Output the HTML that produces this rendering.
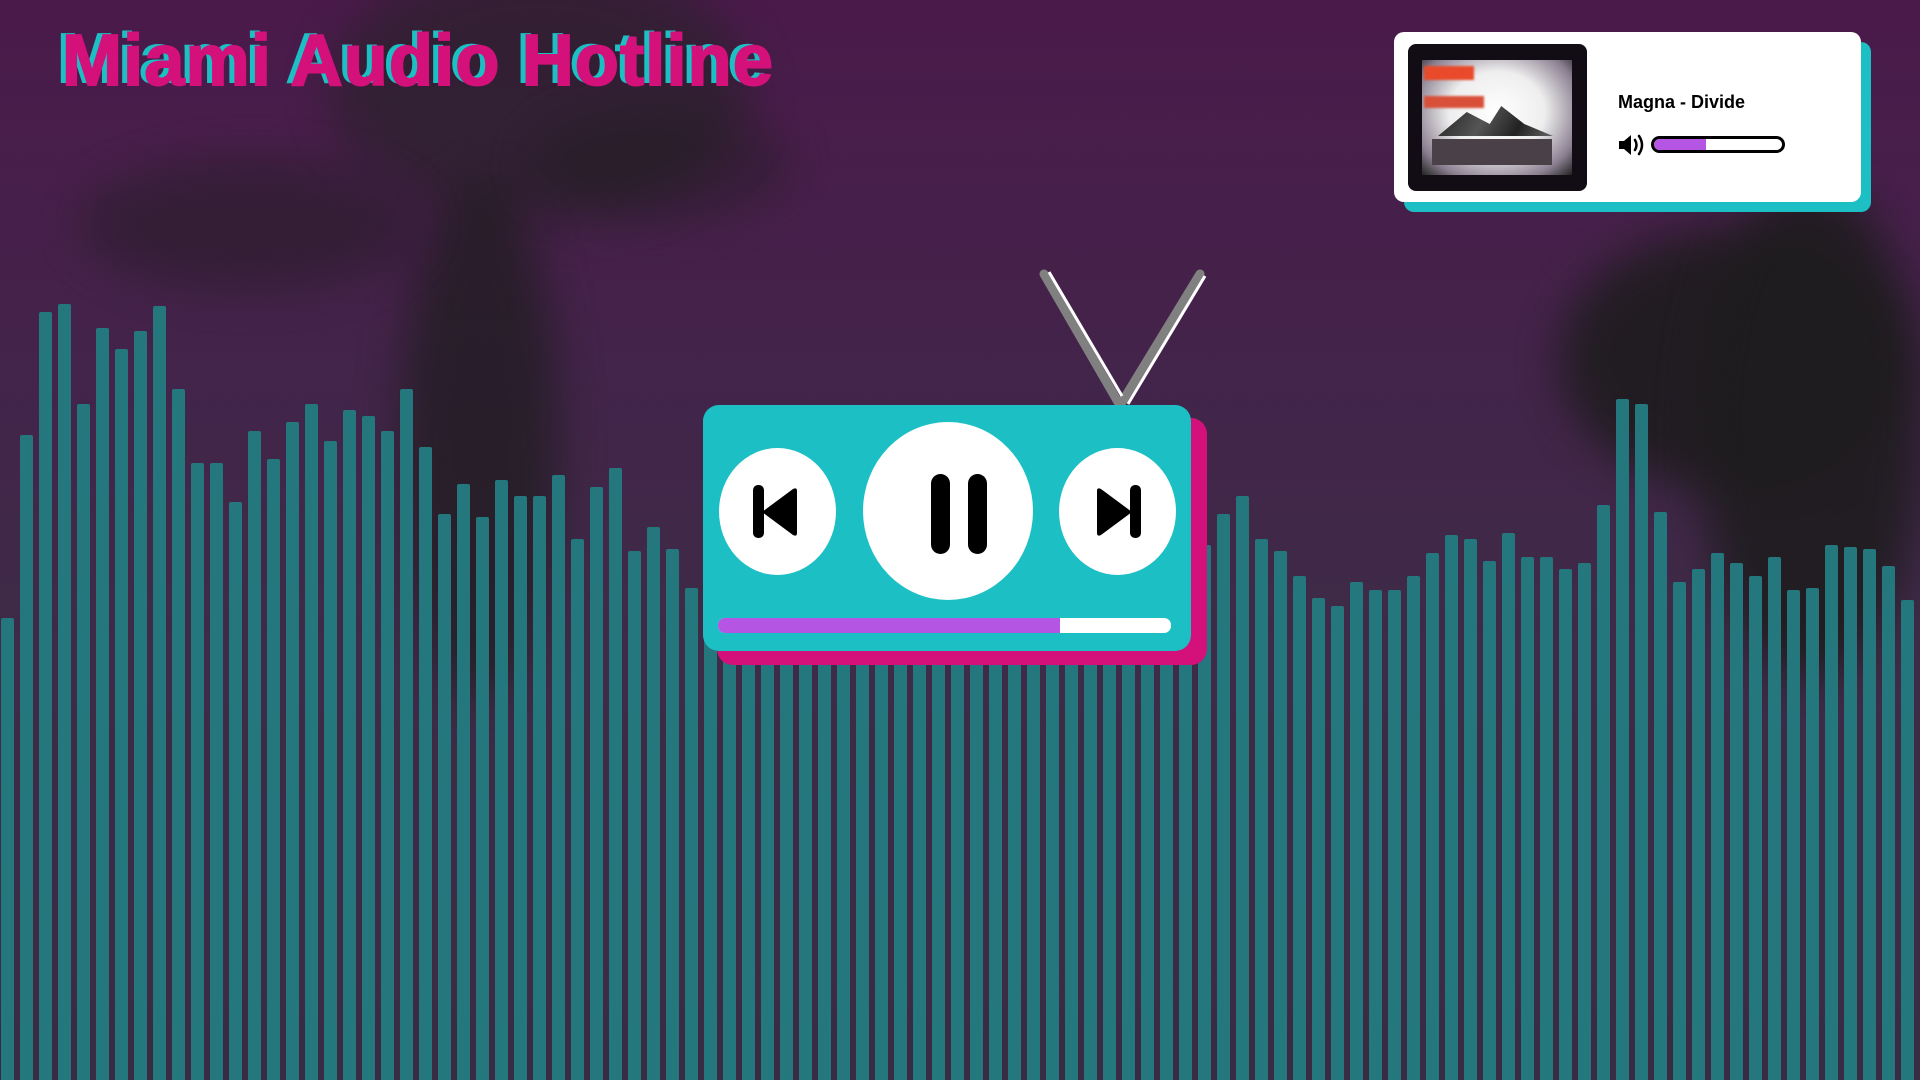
<!DOCTYPE html>
<html><head><meta charset="utf-8"><style>
*{margin:0;padding:0;box-sizing:border-box}
body{width:1920px;height:1080px;overflow:hidden;position:relative;font-family:"Liberation Sans",sans-serif;
background:linear-gradient(180deg,#4a1a4a 0%,#43244a 35%,#3e2b47 60%,#3a2b44 100%)}
.blob{position:absolute;background:#1e1c1e;border-radius:50%;filter:blur(22px);opacity:.8}
.bars{position:absolute;left:1px;top:0;width:1920px;height:1080px;display:flex;align-items:flex-end}
.bars i{display:block;width:13px;margin-right:6px;flex:none;background:#23777d;height:calc(1080px - var(--t)*1.2245px);border-radius:2px 2px 0 0}
h1{position:absolute;left:62px;top:20px;font-size:72px;font-weight:900;color:#d4107a;letter-spacing:1.2px;-webkit-text-stroke:2px #d4107a;text-shadow:-6px -2px 0 #1bbfc4;white-space:nowrap}
.card{position:absolute;left:1394px;top:32px;width:467px;height:170px;background:#fff;border-radius:10px;box-shadow:10px 10px 0 #1bbfc4}
.art{position:absolute;left:14px;top:12px;width:179px;height:147px;border-radius:8px;background:#120d14;overflow:hidden}
.art .scr{position:absolute;left:14px;top:16px;width:150px;height:115px;background:radial-gradient(ellipse at 50% 45%,#fff 0%,#eee 45%,#8a7f90 80%,#222 100%)}
.art .r{position:absolute;left:16px;top:22px;width:50px;height:14px;background:#e84a2a;filter:blur(1px)}
.art .r2{position:absolute;left:16px;top:52px;width:60px;height:12px;background:#d8503a;filter:blur(1px)}
.art .d{position:absolute;left:30px;top:62px;width:115px;height:30px;background:linear-gradient(120deg,#222 0%,#555 40%,#222 70%,#666 100%);clip-path:polygon(0 100%,25% 20%,45% 60%,55% 0,75% 60%,100% 100%)}
.art .d2{position:absolute;left:24px;top:95px;width:120px;height:26px;background:#4a4048}
.title{position:absolute;left:224px;top:60px;font-size:18px;font-weight:700;color:#000}
.vol{position:absolute;left:224px;top:100px}
.slider{position:absolute;left:257px;top:104px;width:134px;height:17px;border:3.5px solid #000;border-radius:9px;overflow:hidden;background:#fff}
.slider div{width:52px;height:100%;background:#b455e3}
.tvs{position:absolute;left:717px;top:418px;width:490px;height:247px;background:#d4107a;border-radius:16px}
.tv{position:absolute;left:703px;top:405px;width:488px;height:246px;background:#1cbfc4;border-radius:16px}
.btn{position:absolute;background:#fff;border-radius:50%}
.bar{position:absolute;left:15px;top:213px;width:453px;height:15px;background:#fff;border-radius:7px;overflow:hidden}
.bar div{width:342px;height:100%;background:#b455e3}
</style></head><body>
<div class="blob" style="left:330px;top:-40px;width:420px;height:260px;background:#252226;opacity:.6"></div>
<div class="blob" style="left:400px;top:180px;width:160px;height:520px;opacity:.7"></div>
<div class="blob" style="left:80px;top:160px;width:340px;height:130px;opacity:.45"></div>
<div class="blob" style="left:530px;top:110px;width:260px;height:110px;opacity:.4"></div>
<div class="blob" style="left:1560px;top:230px;width:340px;height:260px;opacity:.9"></div>
<div class="blob" style="left:1700px;top:180px;width:220px;height:500px;opacity:.9"></div>
<div class="bars">
<i style="--t:505"></i><i style="--t:355"></i><i style="--t:255"></i><i style="--t:248"></i><i style="--t:330"></i><i style="--t:268"></i><i style="--t:285"></i><i style="--t:270"></i><i style="--t:250"></i><i style="--t:318"></i>
<i style="--t:378"></i><i style="--t:378"></i><i style="--t:410"></i><i style="--t:352"></i><i style="--t:375"></i><i style="--t:345"></i><i style="--t:330"></i><i style="--t:360"></i><i style="--t:335"></i><i style="--t:340"></i>
<i style="--t:352"></i><i style="--t:318"></i><i style="--t:365"></i><i style="--t:420"></i><i style="--t:395"></i><i style="--t:422"></i><i style="--t:392"></i><i style="--t:405"></i><i style="--t:405"></i><i style="--t:388"></i>
<i style="--t:440"></i><i style="--t:398"></i><i style="--t:382"></i><i style="--t:450"></i><i style="--t:430"></i><i style="--t:448"></i><i style="--t:480"></i><i style="--t:500"></i><i style="--t:500"></i><i style="--t:500"></i>
<i style="--t:500"></i><i style="--t:500"></i><i style="--t:500"></i><i style="--t:500"></i><i style="--t:500"></i><i style="--t:500"></i><i style="--t:500"></i><i style="--t:500"></i><i style="--t:500"></i><i style="--t:500"></i>
<i style="--t:500"></i><i style="--t:500"></i><i style="--t:500"></i><i style="--t:500"></i><i style="--t:500"></i><i style="--t:500"></i><i style="--t:500"></i><i style="--t:500"></i><i style="--t:500"></i><i style="--t:500"></i>
<i style="--t:500"></i><i style="--t:500"></i><i style="--t:500"></i><i style="--t:445"></i><i style="--t:420"></i><i style="--t:405"></i><i style="--t:440"></i><i style="--t:450"></i><i style="--t:470"></i><i style="--t:488"></i>
<i style="--t:495"></i><i style="--t:475"></i><i style="--t:482"></i><i style="--t:482"></i><i style="--t:470"></i><i style="--t:452"></i><i style="--t:437"></i><i style="--t:440"></i><i style="--t:458"></i><i style="--t:435"></i>
<i style="--t:455"></i><i style="--t:455"></i><i style="--t:465"></i><i style="--t:460"></i><i style="--t:412"></i><i style="--t:326"></i><i style="--t:330"></i><i style="--t:418"></i><i style="--t:475"></i><i style="--t:465"></i>
<i style="--t:452"></i><i style="--t:460"></i><i style="--t:470"></i><i style="--t:455"></i><i style="--t:482"></i><i style="--t:480"></i><i style="--t:445"></i><i style="--t:447"></i><i style="--t:448"></i><i style="--t:462"></i>
<i style="--t:490"></i>
</div>
<h1>Miami Audio Hotline</h1>
<div class="card">
<div class="art"><div class="scr"></div><div class="r"></div><div class="r2"></div><div class="d"></div><div class="d2"></div></div>
<div class="title">Magna - Divide</div>
<svg class="vol" width="30" height="26" viewBox="0 0 30 26"><path d="M1 9h5l7-6v20l-7-6H1z" fill="#000"/><path d="M17 8q3 5 0 10M21 4q6 9 0 18" stroke="#000" stroke-width="2.5" fill="none" stroke-linecap="round"/></svg>
<div class="slider"><div></div></div>
</div>
<svg style="position:absolute;left:1030px;top:262px" width="190" height="150" viewBox="0 0 190 150">
<path d="M14 12L88 140M170 12L92 140" stroke="#808080" stroke-width="9" stroke-linecap="round" fill="none"/>
<path d="M19 10L92 134M175 14L98 142" stroke="#fff" stroke-width="3" fill="none"/>
</svg>
<div class="tvs"></div>
<div class="tv">
<div class="btn" style="left:16px;top:43px;width:117px;height:127px"></div>
<div class="btn" style="left:160px;top:17px;width:170px;height:178px"></div>
<div class="btn" style="left:356px;top:43px;width:117px;height:127px"></div>
<svg style="position:absolute;left:48px;top:80px" width="50" height="54" viewBox="0 0 50 54"><rect x="2" y="0" width="11" height="53" rx="5" fill="#000"/><path d="M11 27L42 4Q46 2 46 6V48Q46 52 42 50Z" fill="#000"/></svg>
<svg style="position:absolute;left:226px;top:67px" width="60" height="84" viewBox="0 0 60 84"><rect x="2" y="2" width="19" height="80" rx="9.5" fill="#000"/><rect x="39" y="2" width="19" height="80" rx="9.5" fill="#000"/></svg>
<svg style="position:absolute;left:390px;top:80px" width="50" height="54" viewBox="0 0 50 54"><rect x="37" y="0" width="11" height="53" rx="5" fill="#000"/><path d="M39 27L8 4Q4 2 4 6V48Q4 52 8 50Z" fill="#000"/></svg>
<div class="bar"><div></div></div>
</div>
</body></html>
